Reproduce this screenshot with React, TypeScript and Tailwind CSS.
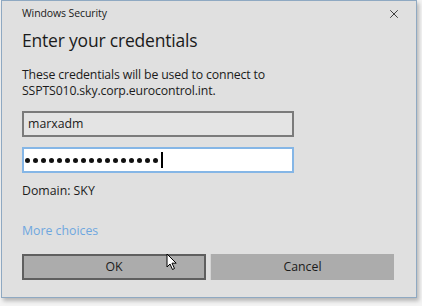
import { X } from 'lucide-react';

const dots = Array.from({ length: 17 });

export default function App() {
  return (
    <div
      className="w-[422px] h-[306px] bg-[#f4f4f4] relative overflow-hidden"
      style={{ fontFamily: '"Open Sans", "Noto Sans", sans-serif' }}
    >
      {/* Dialog */}
      <div className="ml-px w-[416px] h-[298px] bg-[#e0e0e0] border border-[#8fa9c2] shadow-[2px_3px_4px_rgba(0,0,0,0.25)] flex flex-col pl-[20px] pr-[21px]">
        {/* Title bar */}
        <div className="flex items-center justify-between h-[26px]">
          <span className="text-[10.5px] text-[#1a1a1a] tracking-[-0.1px]">Windows Security</span>
          <X size={14} strokeWidth={1.6} className="text-[#333] mr-[-6px]" />
        </div>

        <h1 className="text-[17.5px] leading-[26px] text-[#1b1b1b] tracking-[-0.2px]">
          Enter your credentials
        </h1>

        <div className="text-[12.3px] leading-[16px] text-[#1b1b1b] mt-[14px] tracking-[-0.15px]">
          <div>These credentials will be used to connect to</div>
          <div>SSPTS010.sky.corp.eurocontrol.int.</div>
        </div>

        <div className="mt-[12px] w-[272px] h-[26px] bg-[#e4e4e4] border-2 border-[#7b7b7b] flex items-center px-[4px] text-[12.3px] text-[#1b1b1b]">
          marxadm
        </div>

        <div className="mt-[10px] w-[272px] h-[26px] bg-white border-2 border-[#85b6e6] flex items-center pl-[1px]">
          <div className="flex gap-[3px]">
            {dots.map((_, i) => (
              <span key={i} className="w-[5px] h-[5px] rounded-full bg-[#111]" />
            ))}
          </div>
          <span className="w-[1.5px] h-[16px] bg-black ml-[3px]" />
        </div>

        <div className="mt-[10px] text-[12.3px] leading-[15px] text-[#1b1b1b]">Domain: SKY</div>

        <div className="mt-[25px] text-[12.3px] leading-[15px] text-[#6fa7df]">More choices</div>

        <div className="mt-[16px] flex gap-[4px]">
          <button className="w-[184px] h-[26px] bg-[#acacac] border-2 border-[#5f5f5f] text-[12.3px] text-[#1b1b1b]">
            OK
          </button>
          <button className="w-[184px] h-[26px] bg-[#acacac] border-l border-[#d4d4d4] text-[12.3px] text-[#1b1b1b]">
            Cancel
          </button>
        </div>
      </div>

      {/* Mouse cursor */}
      <svg className="absolute left-[166px] top-[253px]" width="12" height="18" viewBox="0 0 12 18">
        <path d="M1 1 L1 14 L4 11 L6.5 16.5 L8.5 15.5 L6 10.2 L10.2 10.2 Z" fill="white" stroke="black" strokeWidth="1" strokeLinejoin="round" />
      </svg>
    </div>
  );
}
